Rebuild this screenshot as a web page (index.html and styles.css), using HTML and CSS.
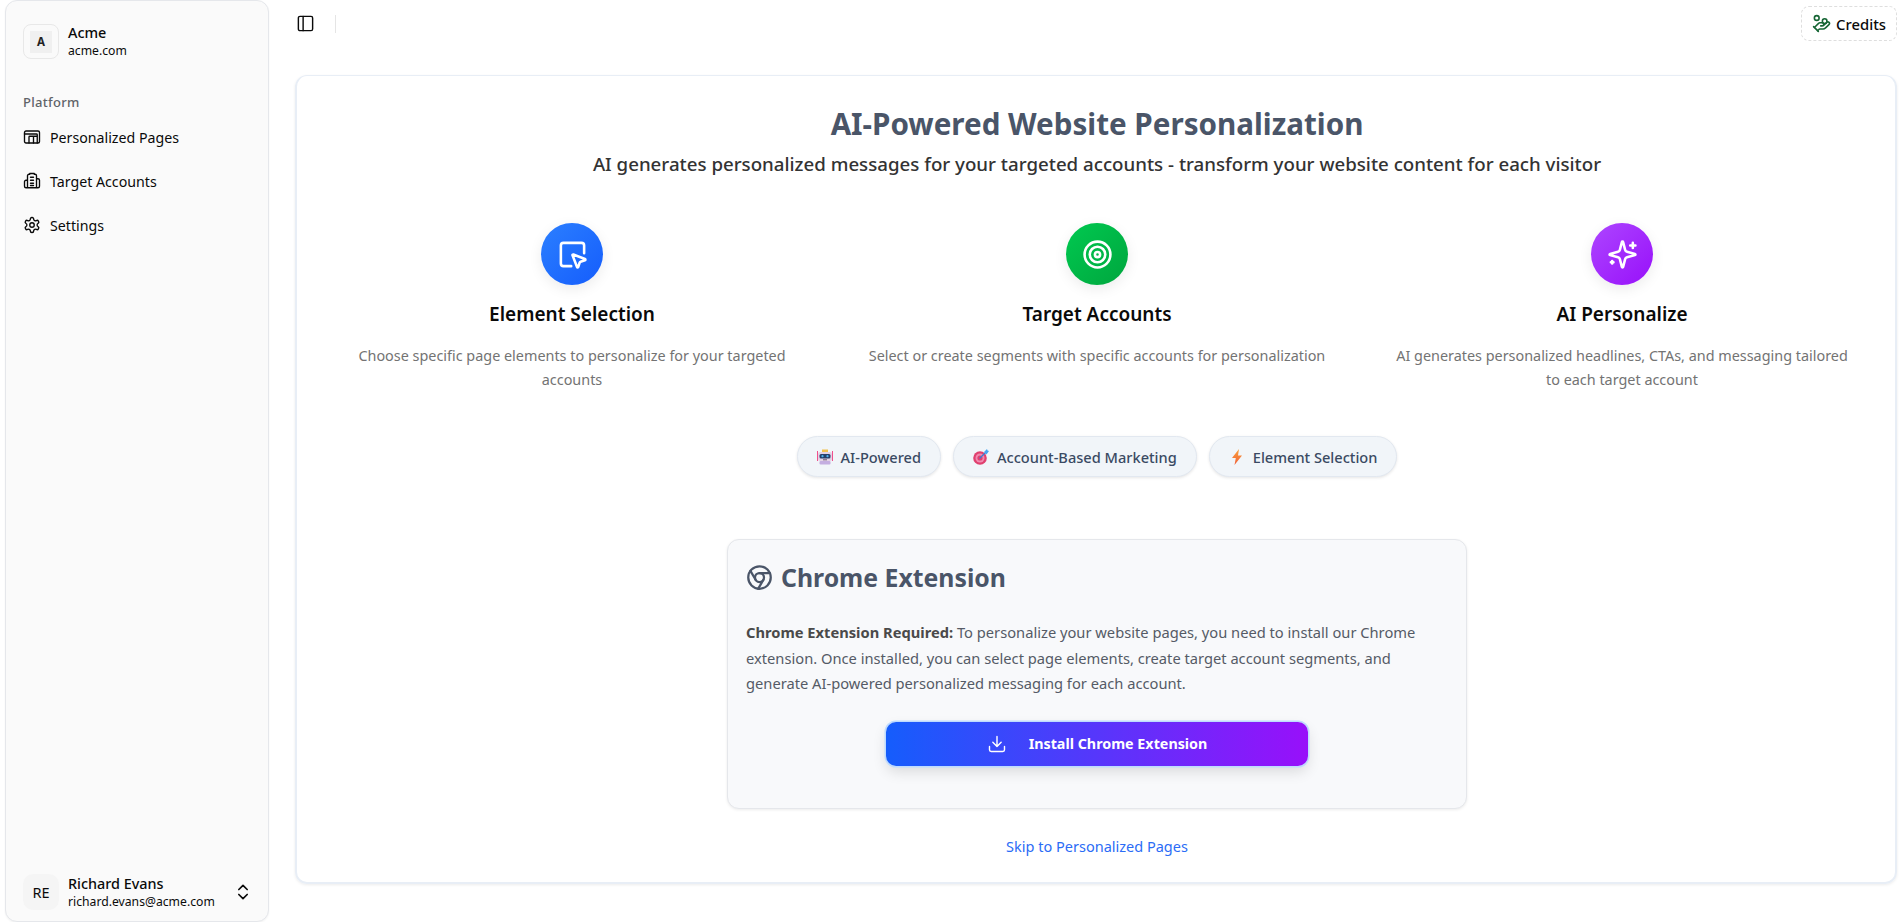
FILE: index.html
```html
<!DOCTYPE html>
<html lang="en">
<head>
<meta charset="utf-8">
<title>AI-Powered Website Personalization</title>
<link rel="stylesheet" href="styles.css">
</head>
<body>
<div class="app">
  <aside class="sidebar">
    <div class="org">
      <div class="org-logo"><span class="org-letter">A</span></div>
      <div class="stack">
        <span class="org-name">Acme</span>
        <span class="org-domain">acme.com</span>
      </div>
    </div>
    <div class="nav-label">Platform</div>
    <nav class="nav">
      <a class="nav-item"><svg class="ic" viewBox="0 0 24 24"><rect x="2" y="4" width="20" height="16" rx="2"/><path d="M2 8h16a1 1 0 0 1 1 1v11M8 20v-8a1 1 0 0 1 1-1h10M14 11v9"/></svg>Personalized Pages</a>
      <a class="nav-item"><svg class="ic" viewBox="0 0 24 24"><path d="M6 21V5a2 2 0 0 1 2-2h1V2h6v1h1a2 2 0 0 1 2 2v16zM6 11H4a2 2 0 0 0-2 2v6a2 2 0 0 0 2 2h2M18 9h2a2 2 0 0 1 2 2v8a2 2 0 0 1-2 2h-2M10 7h4M10 11h4M10 15h4M10 18h4"/></svg>Target Accounts</a>
      <a class="nav-item"><svg class="ic" viewBox="0 0 24 24"><path d="M12.22 2h-.44a2 2 0 0 0-2 2v.18a2 2 0 0 1-1 1.73l-.43.25a2 2 0 0 1-2 0l-.15-.08a2 2 0 0 0-2.73.73l-.22.38a2 2 0 0 0 .73 2.73l.15.1a2 2 0 0 1 1 1.72v.51a2 2 0 0 1-1 1.74l-.15.09a2 2 0 0 0-.73 2.73l.22.38a2 2 0 0 0 2.73.73l.15-.08a2 2 0 0 1 2 0l.43.25a2 2 0 0 1 1 1.73V20a2 2 0 0 0 2 2h.44a2 2 0 0 0 2-2v-.18a2 2 0 0 1 1-1.73l.43-.25a2 2 0 0 1 2 0l.15.08a2 2 0 0 0 2.73-.73l.22-.39a2 2 0 0 0-.73-2.73l-.15-.08a2 2 0 0 1-1-1.74v-.5a2 2 0 0 1 1-1.74l.15-.09a2 2 0 0 0 .73-2.73l-.22-.38a2 2 0 0 0-2.73-.73l-.15.08a2 2 0 0 1-2 0l-.43-.25a2 2 0 0 1-1-1.73V4a2 2 0 0 0-2-2z"/><circle cx="12" cy="12" r="3"/></svg>Settings</a>
    </nav>
    <div class="user">
      <div class="avatar">RE</div>
      <div class="stack user-text">
        <span class="user-name">Richard Evans</span>
        <span class="user-mail">richard.evans@acme.com</span>
      </div>
      <svg class="ic-sm" viewBox="0 0 24 24"><path d="m7 15 5 5 5-5M7 9l5-5 5 5"/></svg>
    </div>
  </aside>
  <main class="main">
    <header class="topbar">
      <svg class="toggle" viewBox="0 0 24 24"><rect x="3" y="3" width="18" height="18" rx="2"/><path d="M9 3v18"/></svg>
      <span class="divider"></span>
      <div class="credits"><svg class="credits-ic" viewBox="0 0 24 24"><path d="M11 15h2a2 2 0 1 0 0-4h-3c-.6 0-1.1.2-1.4.6L3 17"/><path d="m7 21 1.6-1.4c.3-.4.8-.6 1.4-.6h4c1.1 0 2.1-.4 2.8-1.2l4.6-4.4a2 2 0 0 0-2.75-2.91l-4.2 3.9"/><path d="m2 16 6 6"/><circle cx="16" cy="9" r="2.9"/><circle cx="6" cy="5" r="3"/></svg>Credits</div>
    </header>
    <section class="card">
      <h1 class="title">AI-Powered Website Personalization</h1>
      <p class="subtitle">AI generates personalized messages for your targeted accounts - transform your website content for each visitor</p>
      <div class="features">
        <div class="feature">
          <div class="disc disc-blue"><svg class="disc-ic" viewBox="0 0 24 24"><path d="M12.034 12.681a.498.498 0 0 1 .647-.647l9 3.5a.5.5 0 0 1-.033.943l-3.444 1.068a1 1 0 0 0-.66.66l-1.067 3.443a.5.5 0 0 1-.943.033z"/><path d="M21 11V5a2 2 0 0 0-2-2H5a2 2 0 0 0-2 2v14a2 2 0 0 0 2 2h6"/></svg></div>
          <h3 class="feature-title">Element Selection</h3>
          <p class="feature-text">Choose specific page elements to personalize for your targeted accounts</p>
        </div>
        <div class="feature">
          <div class="disc disc-green"><svg class="disc-ic" viewBox="0 0 24 24"><circle cx="12" cy="12" r="10"/><circle cx="12" cy="12" r="6"/><circle cx="12" cy="12" r="2"/></svg></div>
          <h3 class="feature-title">Target Accounts</h3>
          <p class="feature-text">Select or create segments with specific accounts for personalization</p>
        </div>
        <div class="feature">
          <div class="disc disc-purple"><svg class="disc-ic" viewBox="0 0 24 24"><path d="M9.937 15.5A2 2 0 0 0 8.5 14.063l-6.135-1.582a.5.5 0 0 1 0-.962L8.5 9.936A2 2 0 0 0 9.937 8.5l1.582-6.135a.5.5 0 0 1 .963 0L14.063 8.5A2 2 0 0 0 15.5 9.937l6.135 1.581a.5.5 0 0 1 0 .964L15.5 14.063a2 2 0 0 0-1.437 1.437l-1.582 6.135a.5.5 0 0 1-.963 0z"/><path d="M20 3v4M22 5h-4M4 17v2M5 18H3"/></svg></div>
          <h3 class="feature-title">AI Personalize</h3>
          <p class="feature-text">AI generates personalized headlines, CTAs, and messaging tailored to each target account</p>
        </div>
      </div>
      <div class="pills">
        <span class="pill"><svg class="emoji" viewBox="0 0 16 16"><rect x="0" y="2" width="1" height="10" fill="#f0508c"/><rect x="15" y="2" width="1" height="10" fill="#f0508c"/><rect x="5" y="0.5" width="6" height="2.5" fill="#f2c24f"/><rect x="1" y="3" width="14" height="9" rx="2" fill="#e4d3e6"/><rect x="2.5" y="5" width="11" height="4.5" rx="1.5" fill="#27406b"/><circle cx="5.5" cy="7.2" r="1.1" fill="#4fb4f0"/><circle cx="10.5" cy="7.2" r="1.1" fill="#4fb4f0"/><rect x="6" y="10.3" width="4" height="1" fill="#6c5a70"/><rect x="2.5" y="12" width="11" height="3.5" rx="1" fill="#c4aee0"/></svg>AI-Powered</span>
        <span class="pill"><svg class="emoji" viewBox="0 0 16 16"><circle cx="7" cy="9" r="6.8" fill="#e0406f"/><circle cx="7" cy="9" r="4.5" fill="#f08ab0"/><circle cx="7" cy="9" r="2.6" fill="#e0406f"/><path d="M7 9 13 3" stroke="#3a7bd5" stroke-width="1.3"/><path d="M11 3l3-3 .5 1.5L16 2 13.5 5.5z" fill="#45a5f0"/></svg>Account-Based Marketing</span>
        <span class="pill"><svg class="emoji" viewBox="0 0 16 16"><defs><linearGradient id="bolt" x1="0" y1="0" x2="0" y2="1"><stop offset="0" stop-color="#f9a13a"/><stop offset="1" stop-color="#f0603a"/></linearGradient></defs><path d="M10 0 3 9h3.8L5.5 16 13 6.5H9z" fill="url(#bolt)"/></svg>Element Selection</span>
      </div>
      <div class="ext">
        <h2 class="ext-title"><svg class="ext-ic" viewBox="0 0 24 24"><circle cx="12" cy="12" r="10"/><circle cx="12" cy="12" r="4"/><path d="M21.17 8H12M3.95 6.06 8.54 14M10.88 21.94 15.46 14"/></svg>Chrome Extension</h2>
        <p class="ext-text"><strong class="ext-strong">Chrome Extension Required:</strong> To personalize your website pages, you need to install our Chrome extension. Once installed, you can select page elements, create target account segments, and generate AI-powered personalized messaging for each account.</p>
        <button class="install"><svg class="install-ic" viewBox="0 0 24 24"><path d="M21 15v4a2 2 0 0 1-2 2H5a2 2 0 0 1-2-2v-4M7 10l5 5 5-5M12 15V3"/></svg>Install Chrome Extension</button>
      </div>
      <a class="skip">Skip to Personalized Pages</a>
    </section>
  </main>
</div>
</body>
</html>
```
FILE: styles.css
```css
* { box-sizing: border-box; }
html, body { margin: 0; height: 100%; overflow: hidden; }
body { background: #fff; font-family: "Noto Sans", sans-serif; color: #0a0a0a; }
.app { display: flex; height: 922px; }
svg { fill: none; stroke: currentColor; stroke-width: 2; stroke-linecap: round; stroke-linejoin: round; flex: none; }
.ic { width: 18px; height: 18px; stroke-width: 1.8; }
.ic-sm { width: 20px; height: 20px; margin-right: -2px; }

.sidebar { width: 264px; height: 922px; margin-left: 5px; display: flex; flex-direction: column; background: #fafafa; border: 1px solid #e5e7eb; border-radius: 12px; box-shadow: 0 1px 2px rgba(0,0,0,.05); padding: 23px 17px 0; flex: none; }
.org { display: flex; align-items: center; gap: 9px; }
.org-logo { width: 36px; height: 35px; border: 1px solid #e8e8e8; border-radius: 8px; display: flex; align-items: center; justify-content: center; }
.org-letter { width: 22px; height: 22px; background: #f0f0f0; font-size: 11.5px; font-weight: 700; display: flex; align-items: center; justify-content: center; color: #222; }
.stack { display: flex; flex-direction: column; }
.org-name { font-size: 14.4px; font-weight: 500; line-height: 18px; }
.org-domain { font-size: 12.2px; line-height: 17px; }
.nav-label { font-size: 13px; font-weight: 500; color: #5f6368; margin-top: 35px; line-height: 16px; letter-spacing: .3px; }
.nav { display: flex; flex-direction: column; margin-top: 5px; }
.nav-item { height: 44px; display: flex; align-items: center; gap: 9px; font-size: 14.2px; }
.user { margin-top: auto; margin-bottom: 11px; display: flex; align-items: center; gap: 9px; }
.avatar { width: 36px; height: 36px; background: #f5f5f5; border-radius: 10px; display: flex; align-items: center; justify-content: center; font-size: 14.5px; font-weight: 400; }
.user-text { flex: 1; }
.user-name { font-size: 14.4px; font-weight: 500; line-height: 18px; }
.user-mail { font-size: 12.2px; line-height: 17px; }

.main { flex: 1; padding: 0 4px 0 26px; min-width: 0; display: flex; flex-direction: column; }
.topbar { height: 75px; display: flex; align-items: flex-start; padding-top: 14px; }
.toggle { width: 19px; height: 19px; margin-left: 1px; stroke-width: 1.8; }
.divider { width: 1px; height: 18px; background: #e5e5e5; margin: 1px 0 0 20px; }
.credits { margin-left: auto; margin-top: -8px; height: 35px; padding: 0 10px; display: flex; align-items: center; gap: 5px; border: 1px dashed #dedede; border-radius: 8px; font-size: 14.8px; font-weight: 500; }
.credits-ic { width: 19px; height: 19px; color: #166534; }

.card { height: 809px; border: 2px solid #e8eef6; border-top-width: 1px; border-radius: 12px; display: flex; flex-direction: column; align-items: center; padding: 26px 0 0 2px; box-shadow: 0 1px 3px rgba(0,0,0,.08); }
.title { font-size: 29.6px; line-height: 44px; font-weight: 700; color: #4a5568; margin: 0; }
.subtitle { font-size: 18.7px; line-height: 26px; font-weight: 500; color: #333; margin: 5px 0 0; }
.features { align-self: stretch; display: grid; grid-template-columns: repeat(3, 1fr); gap: 23px; padding: 0 22px; margin-top: 46px; }
.feature { display: flex; flex-direction: column; align-items: center; text-align: center; padding: 0 20px; }
.disc { width: 62px; height: 62px; border-radius: 50%; display: flex; align-items: center; justify-content: center; color: #fff; box-shadow: 0 4px 14px rgba(0,0,0,.08); }
.disc-blue { background: linear-gradient(135deg, #2b7fff, #155dfc); }
.disc-green { background: linear-gradient(135deg, #00c950, #00a63e); }
.disc-purple { background: linear-gradient(135deg, #ad46ff, #9810fa); }
.disc-ic { width: 31px; height: 31px; stroke-width: 2; }
.feature-title { font-size: 19px; line-height: 28px; font-weight: 600; margin: 15px 0 0; }
.feature-text { font-size: 14.4px; line-height: 24px; color: #737373; margin: 16px 0 0; }
.pills { display: flex; gap: 12px; margin-top: 44px; }
.pill { height: 41px; padding: 0 19px; display: flex; align-items: center; gap: 8px; background: #f1f5f9; border: 1px solid #e2e8f0; border-radius: 21px; box-shadow: 0 1px 3px rgba(0,0,0,.1); font-size: 14.6px; font-weight: 500; color: #3a4a63; }
.emoji { width: 16px; height: 16px; stroke: none; }
.ext { width: 740px; height: 270px; margin-top: 62px; background: #f8f9fb; border: 1px solid #e5e7eb; border-radius: 12px; box-shadow: 0 1px 3px rgba(0,0,0,.08); padding: 19px 18px 0; display: flex; flex-direction: column; align-items: center; }
.ext-title { align-self: stretch; display: flex; align-items: center; gap: 8px; font-size: 24.8px; line-height: 36px; font-weight: 700; color: #4a5568; margin: 0; }
.ext-ic { width: 27px; height: 27px; }
.ext-text { font-size: 14.7px; line-height: 25.5px; color: #555b66; margin: 25px 0 0; }
.ext-strong { font-weight: 700; color: #4a4a4a; }
.install { width: 422px; height: 44px; margin-top: 25px; flex: none; border: 0; border-radius: 10px; background: linear-gradient(90deg, #155dfc, #9810fa); color: #fff; font-family: inherit; font-size: 14.3px; font-weight: 700; display: flex; align-items: center; justify-content: center; gap: 22px; box-shadow: 0 0 0 1.5px #bedbff, 0 6px 14px rgba(0,0,0,.12); }
.install-ic { width: 20px; height: 20px; stroke-width: 1.7; }
.skip { margin-top: 27px; font-size: 14.5px; line-height: 20px; color: #2b6cf6; }
```
